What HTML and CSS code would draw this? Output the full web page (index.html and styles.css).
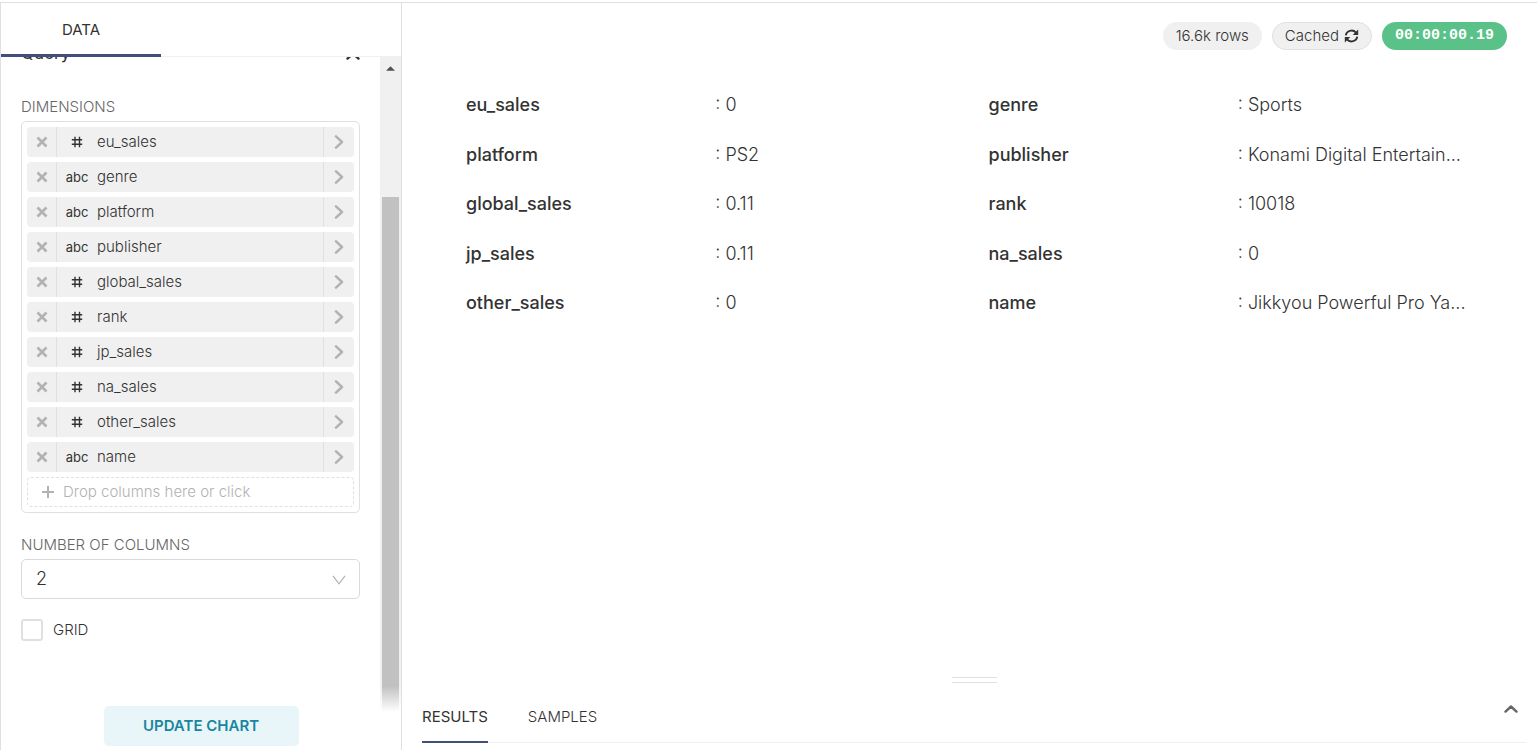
FILE: index.html
```html
<!DOCTYPE html>
<html lang="en">
<head>
<meta charset="utf-8">
<title>Chart explorer</title>
<meta name="viewport" content="width=device-width, initial-scale=1">
<link rel="stylesheet" href="styles.css">
</head>
<body>
<svg class="defs" aria-hidden="true">
  <symbol id="close" viewBox="0 0 12 12"><path d="M1.500 1.500l9 9M10.500 1.500l-9 9" fill="none" stroke="currentColor" stroke-width="2.600"/></symbol>
  <symbol id="right" viewBox="0 0 10 14"><path d="M2 1.400L8 7l-6 5.600" fill="none" stroke="currentColor" stroke-width="2.500" stroke-linecap="round" stroke-linejoin="round"/></symbol>
  <symbol id="hash" viewBox="0 0 12 12"><path d="M4 .8v10.400M8.500 .8v10.400M.8 3.800h10.400M.8 8.300h10.400" fill="none" stroke="currentColor" stroke-width="1.400"/></symbol>
  <symbol id="up" viewBox="0 0 14 8"><path d="M1.500 6.600L7 1.500l5.500 5.100" fill="none" stroke="currentColor" stroke-width="2.400" stroke-linecap="round" stroke-linejoin="round"/></symbol>
</svg>
<div class="app">
  <aside class="sidebar">
    <nav class="side-tabs"><button class="side-tab">DATA</button></nav>
    <div class="side-body">
      <div class="controls">
        <div class="section-head"><span>Query</span><svg class="section-caret"><use href="#up"/></svg></div>
        <h2 class="label">DIMENSIONS</h2>
        <div class="dims">
          <div class="dim"><button class="dim-x" aria-label="Remove eu_sales"><svg><use href="#close"/></svg></button><span class="type"><svg><use href="#hash"/></svg></span><span class="dim-name">eu_sales</span><button class="dim-go" aria-label="Edit eu_sales"><svg><use href="#right"/></svg></button></div>
          <div class="dim"><button class="dim-x" aria-label="Remove genre"><svg><use href="#close"/></svg></button><span class="type">abc</span><span class="dim-name">genre</span><button class="dim-go" aria-label="Edit genre"><svg><use href="#right"/></svg></button></div>
          <div class="dim"><button class="dim-x" aria-label="Remove platform"><svg><use href="#close"/></svg></button><span class="type">abc</span><span class="dim-name">platform</span><button class="dim-go" aria-label="Edit platform"><svg><use href="#right"/></svg></button></div>
          <div class="dim"><button class="dim-x" aria-label="Remove publisher"><svg><use href="#close"/></svg></button><span class="type">abc</span><span class="dim-name">publisher</span><button class="dim-go" aria-label="Edit publisher"><svg><use href="#right"/></svg></button></div>
          <div class="dim"><button class="dim-x" aria-label="Remove global_sales"><svg><use href="#close"/></svg></button><span class="type"><svg><use href="#hash"/></svg></span><span class="dim-name">global_sales</span><button class="dim-go" aria-label="Edit global_sales"><svg><use href="#right"/></svg></button></div>
          <div class="dim"><button class="dim-x" aria-label="Remove rank"><svg><use href="#close"/></svg></button><span class="type"><svg><use href="#hash"/></svg></span><span class="dim-name">rank</span><button class="dim-go" aria-label="Edit rank"><svg><use href="#right"/></svg></button></div>
          <div class="dim"><button class="dim-x" aria-label="Remove jp_sales"><svg><use href="#close"/></svg></button><span class="type"><svg><use href="#hash"/></svg></span><span class="dim-name">jp_sales</span><button class="dim-go" aria-label="Edit jp_sales"><svg><use href="#right"/></svg></button></div>
          <div class="dim"><button class="dim-x" aria-label="Remove na_sales"><svg><use href="#close"/></svg></button><span class="type"><svg><use href="#hash"/></svg></span><span class="dim-name">na_sales</span><button class="dim-go" aria-label="Edit na_sales"><svg><use href="#right"/></svg></button></div>
          <div class="dim"><button class="dim-x" aria-label="Remove other_sales"><svg><use href="#close"/></svg></button><span class="type"><svg><use href="#hash"/></svg></span><span class="dim-name">other_sales</span><button class="dim-go" aria-label="Edit other_sales"><svg><use href="#right"/></svg></button></div>
          <div class="dim"><button class="dim-x" aria-label="Remove name"><svg><use href="#close"/></svg></button><span class="type">abc</span><span class="dim-name">name</span><button class="dim-go" aria-label="Edit name"><svg><use href="#right"/></svg></button></div>
          <button class="drop"><svg viewBox="0 0 12 12"><path d="M6 0v12M0 6h12" stroke="currentColor" stroke-width="2"/></svg>Drop columns here or click</button>
        </div>
        <label class="label cols-label" for="cols">NUMBER OF COLUMNS</label>
        <div class="select-wrap">
          <select id="cols" class="select"><option>2</option></select>
          <svg class="select-arrow" viewBox="0 0 14 10"><path d="M1 .8l6 8 6-8" fill="none" stroke="currentColor" stroke-width="1.200"/></svg>
        </div>
        <label class="check"><input type="checkbox">GRID</label>
      </div>
      <div class="track" aria-hidden="true"><svg class="track-up" viewBox="0 0 10 5"><path d="M0 5l5-5 5 5z" fill="currentColor"/></svg><div class="thumb"></div></div>
    </div>
    <div class="side-foot"><button class="update">UPDATE CHART</button></div>
  </aside>
  <main class="main">
    <header class="badges">
      <span class="badge">16.6k rows</span>
      <button class="badge cached">Cached<svg viewBox="0 0 14 14"><g fill="none" stroke="currentColor" stroke-width="1.900"><path d="M1.300 6.300A5.700 5.300 0 0 1 11.500 3.700M12.700 7.700A5.700 5.300 0 0 1 2.500 10.300"/></g><path d="M13.700 .6v5.300H8.200zM.3 13.400V8.100h5.500z" fill="currentColor"/></svg></button>
      <span class="badge timer">00:00:00.19</span>
    </header>
    <section class="chart">
      <dl class="facts">
        <div class="fact"><dt>eu_sales</dt><dd>: 0</dd></div>
        <div class="fact"><dt>genre</dt><dd>: Sports</dd></div>
        <div class="fact"><dt>platform</dt><dd>: PS2</dd></div>
        <div class="fact"><dt>publisher</dt><dd>: Konami Digital Entertain...</dd></div>
        <div class="fact"><dt>global_sales</dt><dd>: 0.11</dd></div>
        <div class="fact"><dt>rank</dt><dd>: 10018</dd></div>
        <div class="fact"><dt>jp_sales</dt><dd>: 0.11</dd></div>
        <div class="fact"><dt>na_sales</dt><dd>: 0</dd></div>
        <div class="fact"><dt>other_sales</dt><dd>: 0</dd></div>
        <div class="fact"><dt>name</dt><dd>: Jikkyou Powerful Pro Ya...</dd></div>
      </dl>
    </section>
    <div class="handle"></div>
    <footer class="data-tabs">
      <button class="data-tab active">RESULTS</button>
      <button class="data-tab">SAMPLES</button>
      <button class="expand" aria-label="Expand data panel"><svg><use href="#up"/></svg></button>
    </footer>
  </main>
</div>
</body>
</html>
```
FILE: styles.css
```css
* { box-sizing: border-box; }
body {
  margin: 0;
  background: #fff;
  color: #333;
  font: 300 15px/20px Inter, sans-serif;
}
button {
  margin: 0;
  padding: 0;
  border: 0;
  background: none;
  color: inherit;
  font: inherit;
}
svg { display: block; flex: none; }
.defs { position: absolute; width: 0; height: 0; }

.app {
  display: flex;
  height: 100vh;
  padding-top: 2px;
}

/* Sidebar */
.sidebar {
  position: relative;
  display: flex;
  flex-direction: column;
  flex: none;
  width: 402px;
  border: 1px solid #e0e0e0;
  border-bottom: 0;
}
.side-tabs {
  display: flex;
  flex: none;
  height: 54px;
  border-bottom: 1px solid #f0f0f0;
}
.side-tab {
  width: 160px;
  height: 54px;
  padding-top: 2px;
  border-bottom: 3px solid #444e7c;
  font-weight: 400;
}
.side-body {
  display: flex;
  flex: 1;
  min-height: 0;
  overflow: hidden;
}
.controls {
  flex: 1;
  padding: 0 20px;
}
.section-head {
  display: flex;
  align-items: flex-end;
  justify-content: space-between;
  height: 6px;
  overflow: hidden;
  font-size: 17px;
  font-weight: 400;
}
.section-caret { width: 14px; height: 8px; margin-bottom: 3px; }
.label {
  display: block;
  margin: 34px 0 4px;
  color: #666;
  font-size: 15px;
  font-weight: 300;
}
.dims {
  display: grid;
  gap: 5px;
  padding: 5px;
  border: 1px solid #e0e0e0;
  border-radius: 5px;
}
.dim {
  display: flex;
  align-items: center;
  height: 30px;
  border-radius: 4px;
  background: #f0f0f0;
}
.dim-x, .dim-go {
  display: flex;
  align-items: center;
  justify-content: center;
  width: 30px;
  height: 30px;
  color: #b2b2b2;
}
.dim-x { border-right: 1px solid #e0e0e0; }
.dim-go { width: 31px; border-left: 1px solid #e0e0e0; }
.dim-x svg { width: 12px; height: 12px; }
.dim-go svg { width: 10px; height: 14px; }
.type {
  display: flex;
  justify-content: center;
  width: 40px;
  font-size: 13px;
  font-weight: 400;
}
.type svg { width: 12px; height: 12px; }
.dim-name { flex: 1; }
.drop {
  display: flex;
  align-items: center;
  gap: 9px;
  height: 30px;
  padding: 0 14px;
  border: 1px dashed #e0e0e0;
  border-radius: 4px;
  color: #b2b2b2;
}
.drop svg { width: 12px; height: 12px; }
.cols-label { margin: 22px 0 4px; }
.select-wrap { position: relative; }
.select {
  display: block;
  appearance: none;
  width: 100%;
  height: 40px;
  padding: 0 14px;
  border: 1px solid #d9d9d9;
  border-radius: 5px;
  background: #fff;
  color: #333;
  font: 300 18px/20px Inter, sans-serif;
}
.select-arrow {
  position: absolute;
  top: 16px;
  right: 14px;
  width: 14px;
  height: 10px;
  color: #b2b2b2;
  pointer-events: none;
}
.check {
  display: flex;
  align-items: center;
  gap: 10px;
  margin-top: 20px;
}
.check input {
  appearance: none;
  width: 22px;
  height: 22px;
  margin: 0;
  border: 2px solid #e0e0e0;
  border-radius: 3px;
  background: #fff;
}
.track {
  display: flex;
  flex-direction: column;
  align-items: center;
  flex: none;
  width: 21px;
  padding: 9px 2px 0;
  background: #f0f0f0;
}
.track-up { width: 9px; height: 5px; color: #505050; }
.thumb { flex: 1; width: 100%; margin-top: 126px; background: #c1c1c1; }
.side-foot {
  position: absolute;
  right: 0;
  bottom: 0;
  left: 0;
  display: flex;
  justify-content: center;
  padding: 20px 0 4px;
  background: linear-gradient(transparent, #fff 26px);
}
.update {
  width: 195px;
  height: 40px;
  border-radius: 5px;
  background: #e9f6f9;
  color: #1a85a0;
  font-weight: 600;
}

/* Chart area */
.main {
  display: flex;
  flex-direction: column;
  flex: 1;
  min-width: 0;
  border-top: 1px solid #e0e0e0;
}
.badges {
  display: flex;
  justify-content: flex-end;
  gap: 10px;
  padding: 19px 30px 0;
}
.badge {
  display: flex;
  align-items: center;
  gap: 5px;
  height: 28px;
  padding: 0 13px;
  border-radius: 14px;
  background: #f0f0f0;
}
.cached { padding: 0 12px; border: 1px solid #e0e0e0; }
.cached svg { width: 15px; height: 14px; }
.timer {
  background: #5ac189;
  color: #fff;
  font: bold 15px/20px "Liberation Mono", monospace;
}
.chart { flex: 1; padding: 30px 38px 0 52px; }
.facts {
  display: grid;
  grid-template-columns: 1fr 1fr;
  margin: 0;
  font-size: 18px;
  line-height: 1.42;
}
.fact {
  display: grid;
  grid-template-columns: 1fr 1fr;
  padding: 12px;
}
.fact dt { font-weight: 500; }
.fact dd { margin: 0; white-space: nowrap; }
.handle {
  align-self: center;
  width: 45px;
  height: 6px;
  margin-left: 10px;
  border: 1px solid #e0e0e0;
  border-width: 1px 0;
}
.data-tabs {
  display: flex;
  gap: 40px;
  height: 52px;
  margin: 8px 11px 7px 20px;
  border-bottom: 1px solid #f0f0f0;
}
.data-tab { height: 52px; padding-top: 2px; border-bottom: 2px solid transparent; }
.data-tab.active { border-color: #444e7c; font-weight: 400; }
.expand {
  align-self: flex-start;
  margin: 14px 8px 0 auto;
  color: #666;
}
.expand svg { width: 14px; height: 8px; }
```
